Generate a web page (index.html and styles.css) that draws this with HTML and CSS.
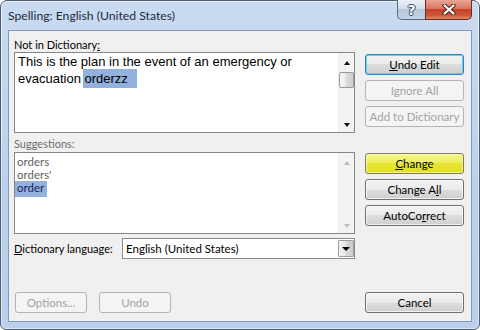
FILE: index.html
```html
<!DOCTYPE html>
<html lang="en">
<head>
<meta charset="UTF-8" />
<title>Spelling: English (United States)</title>
<link rel="stylesheet" href="styles.css">
</head>
<body>
<div class="window">
  <div class="titlebar">
    <span class="title">Spelling: English (United States)</span>
    <div class="caption-btns">
      <span class="cap-btn help">?</span>
      <span class="cap-btn close">
        <svg width="14" height="11" viewBox="0 0 14 11">
          <path d="M2.5 1.5 L11.5 9.5 M11.5 1.5 L2.5 9.5" stroke="#4b2620" stroke-width="4.2" stroke-linecap="round" fill="none"/>
          <path d="M2.5 1.5 L11.5 9.5 M11.5 1.5 L2.5 9.5" stroke="#fff" stroke-width="2.2" stroke-linecap="round" fill="none"/>
        </svg>
      </span>
    </div>
  </div>

  <div class="client">
    <label class="label not-in-dict">Not in Dictionary<u>:</u></label>

    <div class="textbox">
      <div class="text">This is the plan in the event of an emergency or<br>evacuation <span class="bad">orderzz</span></div>
      <div class="scroll">
        <span class="arrow up"></span>
        <span class="thumb"></span>
        <span class="spacer"></span>
        <span class="arrow down"></span>
      </div>
    </div>

    <div class="stack top-stack">
      <button class="btn default"><u>U</u>ndo Edit</button>
      <button class="btn" disabled>Ignore All</button>
      <button class="btn" disabled>Add to Dictionary</button>
    </div>

    <label class="label dim sugg-label">Suggestions:</label>

    <div class="textbox list">
      <div class="items">
        <div class="item">orders</div>
        <div class="item">orders'</div>
        <div class="item"><span class="sel">order</span></div>
      </div>
      <div class="scroll off">
        <span class="arrow up"></span>
        <span class="spacer"></span>
        <span class="arrow down"></span>
      </div>
    </div>

    <div class="stack bottom-stack">
      <button class="btn hot"><u>C</u>hange</button>
      <button class="btn">Change A<u>l</u>l</button>
      <button class="btn">AutoCo<u>r</u>rect</button>
    </div>

    <div class="lang">
      <label class="label"><u>D</u>ictionary language:</label>
      <div class="select">
        <span>English (United States)</span>
        <span class="dd"></span>
      </div>
    </div>

    <div class="foot">
      <button class="btn small" disabled>Options...</button>
      <button class="btn small" disabled>Undo</button>
    </div>

    <button class="btn cancel">Cancel</button>
  </div>
</div>
</body>
</html>
```

FILE: styles.css
```css
:root {
  --ui-font: "Segoe UI", Lato, "Noto Sans", sans-serif;
  --face: #f0f0f0;
  --sel-color: #93b1dd;
}

* {
  box-sizing: border-box;
}

body {
  margin: 0;
  font-family: var(--ui-font);
  font-size: 11px;
  color: #000;
}

.window {
  width: 480px;
  height: 330px;
  display: flex;
  flex-direction: column;
  padding: 0 7px 7px;
  border: 1px solid #4e5d70;
  border-radius: 7px 7px 6px 6px;
  background: linear-gradient(#c9dbf1, #bcd2ec 50%, #b9cfea);
  box-shadow: inset 0 0 0 1px rgb(255 255 255 / 0.55);
}

/* title bar */
.titlebar {
  height: 29px;
  flex: none;
  display: flex;
  align-items: flex-start;
}

.title {
  flex: 1;
  font-size: 12.2px;
  line-height: 29px;
  color: #1e2a3a;
}

.caption-btns {
  display: flex;
  margin-top: -1px;
}

.cap-btn {
  height: 20px;
  display: flex;
  align-items: center;
  justify-content: center;
  border: 1px solid #5d6a7c;
  border-top: none;
}

.cap-btn.help {
  width: 28px;
  border-right: none;
  border-radius: 0 0 0 5px;
  background: linear-gradient(#e9eff7, #d5dfeb 45%, #b7c7d9 50%, #c3d4e7);
  font: bold 14px "DejaVu Sans", sans-serif;
  color: #fff;
  text-shadow: 1px 0 #34465c, -1px 0 #34465c, 0 1px #34465c, 0 -1px #34465c;
}

.cap-btn.close {
  width: 47px;
  border-color: #6c2b22;
  border-radius: 0 0 5px 0;
  background: linear-gradient(#e9a596, #d9765f 45%, #c5432b 50%, #cf5638 80%, #e08868);
}

/* client area */
.client {
  flex: 1;
  background: var(--face);
  border: 1px solid #8399b4;
  padding: 6px 7px 0 5px;
  display: grid;
  grid-template-columns: 341px 99px;
  grid-template-rows: 15px 81px 19px 82px 25px 1fr;
  grid-template-areas:
    "l1 ."
    "box1 btns1"
    "l2 ."
    "box2 btns2"
    "lang ."
    "foot cancel";
  column-gap: 10px;
}

.label {
  line-height: 15px;
  white-space: nowrap;
}

.not-in-dict {
  grid-area: l1;
}

.sugg-label {
  grid-area: l2;
  align-self: end;
  line-height: 16px;
}

.dim {
  color: #6d6d6d;
}

.textbox {
  grid-area: box1;
  border: 1px solid #868686;
  background: #fff;
  display: flex;
}

.textbox .text {
  flex: 1;
  padding: 0 3px;
  font: 13px/17px "Liberation Sans", Arial, sans-serif;
}

.bad {
  background: var(--sel-color);
  padding: 2px 9px 2px 2px;
  margin-left: -2px;
}

.scroll {
  width: 16px;
  flex: none;
  background: #f3f3f3;
  border-left: 1px solid #ebebeb;
  display: flex;
  flex-direction: column;
  align-items: center;
}

.arrow {
  height: 17px;
  width: 100%;
  display: flex;
  align-items: center;
  justify-content: center;
  padding-top: 2px;
}

.arrow::before {
  content: "";
  border-left: 3.5px solid transparent;
  border-right: 3.5px solid transparent;
}

.arrow.up::before {
  border-bottom: 4px solid #111;
}

.arrow.down::before {
  border-top: 4px solid #111;
}

.scroll.off .arrow.up::before {
  border-bottom-color: #bdbdbd;
}

.scroll.off .arrow.down::before {
  border-top-color: #bdbdbd;
}

.thumb {
  width: 15px;
  height: 16px;
  margin-top: 2px;
  border: 1px solid #9a9a9a;
  border-radius: 2px;
  background: linear-gradient(90deg, #f6f6f6, #e8e8e8 50%, #d9d9d9 50%, #d2d2d2);
}

.spacer {
  flex: 1;
}

.list {
  grid-area: box2;
}

.items {
  flex: 1;
  padding-top: 2px;
  font-size: 11.5px;
  line-height: 13px;
  color: #5f5f5f;
}

.item {
  padding-left: 2px;
}

.sel {
  display: inline-block;
  margin-left: -2px;
  padding: 0 3px 3px 2px;
  background: var(--sel-color);
  color: #1c1c5e;
}

/* buttons */
button {
  font: inherit;
  color: inherit;
  margin: 0;
  padding: 0;
}

.btn {
  height: 21px;
  border: 1px solid #707070;
  border-radius: 3px;
  background: linear-gradient(#f2f2f2, #ebebeb 50%, #dddddd 50%, #cfcfcf);
  box-shadow: inset 0 0 0 1px rgb(255 255 255 / 0.7);
  display: flex;
  align-items: center;
  justify-content: center;
  white-space: nowrap;
  font-size: 11.5px;
}

.btn.default {
  border-color: #3c7fb1;
  box-shadow: inset 0 0 0 1px #5ed2f6;
}

.btn.hot {
  border-color: #7d7d5a;
  background: linear-gradient(#f5f58c, #eeee5a 50%, #e6e633 50%, #e0e024);
  box-shadow: inset 0 0 0 1px rgb(255 255 210 / 0.6);
}

.btn:disabled {
  border-color: #b1b5b9;
  background: #f4f4f4;
  box-shadow: none;
  color: #a3a3a3;
}

.stack {
  display: flex;
  flex-direction: column;
  gap: 5px;
}

.top-stack {
  grid-area: btns1;
  padding-top: 2px;
}

.bottom-stack {
  grid-area: btns2;
  padding-top: 1px;
}

.lang {
  grid-area: lang;
  align-self: end;
  display: flex;
  align-items: center;
  justify-content: space-between;
}

.select {
  width: 233px;
  height: 21px;
  border: 1px solid #8a8a8a;
  background: #fff;
  display: flex;
  align-items: center;
  padding: 1px 0 1px 3px;
  font-size: 11.5px;
}

.dd {
  margin-left: auto;
  width: 16px;
  height: 100%;
  border: 1px solid #9e9e9e;
  border-radius: 1px;
  background: linear-gradient(90deg, #f4f4f4, #e6e6e6 50%, #d8d8d8 50%, #cdcdcd);
  display: flex;
  align-items: center;
  justify-content: center;
}

.dd::before {
  content: "";
  border-left: 4px solid transparent;
  border-right: 4px solid transparent;
  border-top: 4px solid #000;
}

.foot {
  grid-area: foot;
  align-self: end;
  display: flex;
  gap: 12px;
  padding-left: 1px;
  margin-bottom: 8px;
}

.btn.small {
  width: 72px;
}

.cancel {
  grid-area: cancel;
  align-self: end;
  margin-bottom: 8px;
}
```
